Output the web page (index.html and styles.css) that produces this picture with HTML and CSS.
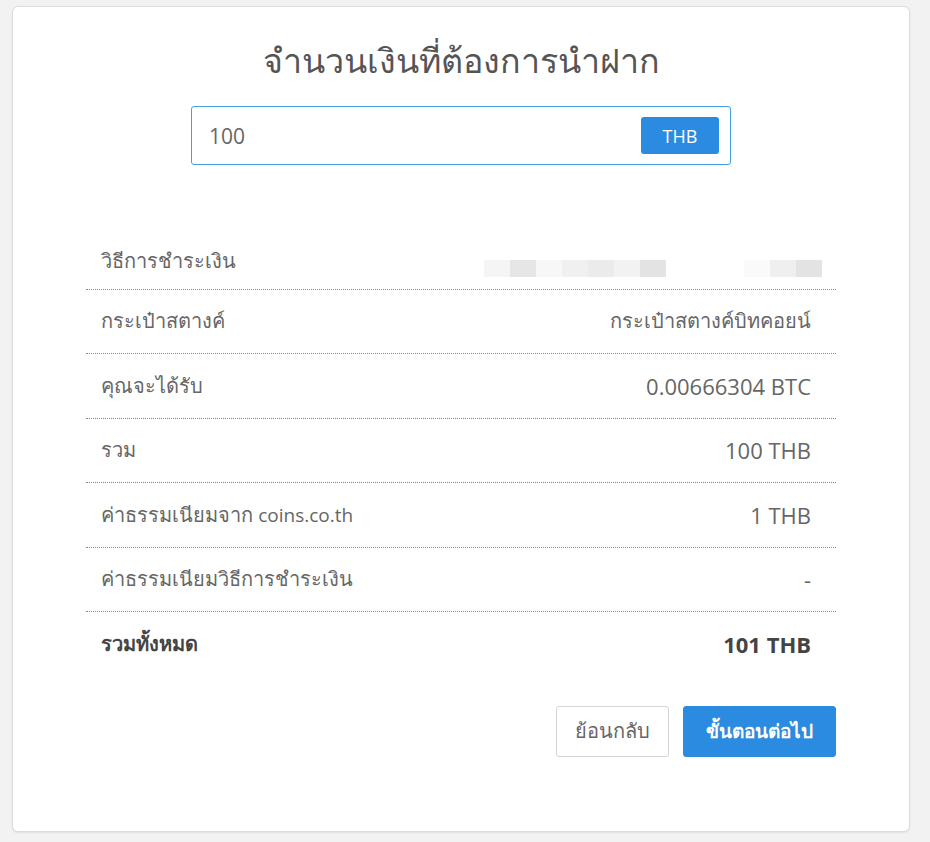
FILE: index.html
```html
<!DOCTYPE html>
<html lang="th">
<head>
<meta charset="utf-8">
<link rel="stylesheet" href="styles.css">
</head>
<body>
<div class="card">
  <h1 class="title">จำนวนเงินที่ต้องการนำฝาก</h1>
  <div class="amount">
    <span class="amount-value">100</span>
    <span class="currency">THB</span>
  </div>
  <div class="rows">
    <div class="row">
      <span class="label">วิธีการชำระเงิน</span>
      <span class="blur">
        <i style="background:#f5f5f5"></i><i style="background:#e6e6e6"></i><i style="background:#f7f7f7"></i><i style="background:#f0f0f0"></i><i style="background:#ebebeb"></i><i style="background:#f2f2f2"></i><i style="background:#e3e3e3"></i>
        <b class="gap"></b>
        <i style="background:#fafafa"></i><i style="background:#efefef"></i><i style="background:#e3e3e3"></i>
      </span>
    </div>
    <div class="row">
      <span class="label">กระเป๋าสตางค์</span>
      <span class="value">กระเป๋าสตางค์บิทคอยน์</span>
    </div>
    <div class="row">
      <span class="label">คุณจะได้รับ</span>
      <span class="value latin">0.00666304 BTC</span>
    </div>
    <div class="row">
      <span class="label">รวม</span>
      <span class="value latin">100 THB</span>
    </div>
    <div class="row">
      <span class="label">ค่าธรรมเนียมจาก <span class="small-latin">coins.co.th</span></span>
      <span class="value latin">1 THB</span>
    </div>
    <div class="row">
      <span class="label">ค่าธรรมเนียมวิธีการชำระเงิน</span>
      <span class="value latin">-</span>
    </div>
    <div class="row total">
      <span class="label">รวมทั้งหมด</span>
      <span class="value latin">101 THB</span>
    </div>
  </div>
  <div class="actions">
    <button class="btn btn-back">ย้อนกลับ</button>
    <button class="btn btn-next">ขั้นตอนต่อไป</button>
  </div>
</div>
</body>
</html>
```

FILE: styles.css
```css
html, body {
  margin: 0;
  padding: 0;
  background: #f2f2f2;
}
body {
  padding: 6px 20px 10px 12px;
  font-family: "Open Sans", "Noto Sans", "DejaVu Sans", sans-serif;
  color: #666;
}
.card {
  box-sizing: border-box;
  width: 898px;
  height: 826px;
  background: #fff;
  border: 1px solid #dcdcdc;
  border-radius: 6px;
  box-shadow: 0 1px 2px rgba(0,0,0,0.08);
  padding: 30px 73px 0;
  display: flex;
  flex-direction: column;
  align-items: center;
}
.title {
  margin: 0;
  font-size: 34px;
  font-weight: 400;
  color: #555;
  line-height: 46px;
  text-align: center;
}
.amount {
  box-sizing: border-box;
  margin-top: 23px;
  width: 540px;
  height: 59px;
  border: 1px solid #45a0ea;
  border-radius: 3px;
  display: flex;
  align-items: center;
  justify-content: space-between;
  padding: 0 11px 0 17px;
}
.amount-value {
  font-size: 21px;
  color: #666;
}
.currency {
  width: 78px;
  height: 37px;
  background: #2a8be0;
  color: #fff;
  border-radius: 3px;
  font-size: 18px;
  display: flex;
  align-items: center;
  justify-content: center;
}
.rows {
  margin-top: 60px;
  width: 750px;
  display: flex;
  flex-direction: column;
}
.row {
  box-sizing: border-box;
  height: 64.5px;
  padding: 0 25px 0 15px;
  display: flex;
  align-items: center;
  justify-content: space-between;
  border-bottom: 1px dotted #888;
  font-size: 20px;
  color: #666;
}
.latin {
  font-size: 22px;
}
.small-latin {
  font-size: 19px;
}
.row.total {
  border-bottom: none;
  font-weight: 700;
  color: #444;
}
.row:first-child {
  align-items: flex-start;
  padding-top: 20px;
}
.blur {
  display: flex;
  margin-top: 15px;
  margin-right: -11px;
}
.blur i {
  display: block;
  width: 26px;
  height: 17px;
}
.blur .gap {
  display: block;
  width: 78px;
}
.actions {
  margin-top: 29px;
  width: 750px;
  display: flex;
  justify-content: flex-end;
  gap: 14px;
}
.btn {
  font-family: "Open Sans", "Noto Sans", "DejaVu Sans", sans-serif;
  height: 51px;
  border-radius: 3px;
  cursor: pointer;
  padding: 0;
}
.btn-back {
  width: 113px;
  background: #fff;
  border: 1px solid #d5d5d5;
  color: #666;
  font-size: 20px;
}
.btn-next {
  width: 153px;
  background: #2a8be0;
  border: 1px solid #2a8be0;
  color: #fff;
  font-weight: 700;
  font-size: 19px;
}
```
